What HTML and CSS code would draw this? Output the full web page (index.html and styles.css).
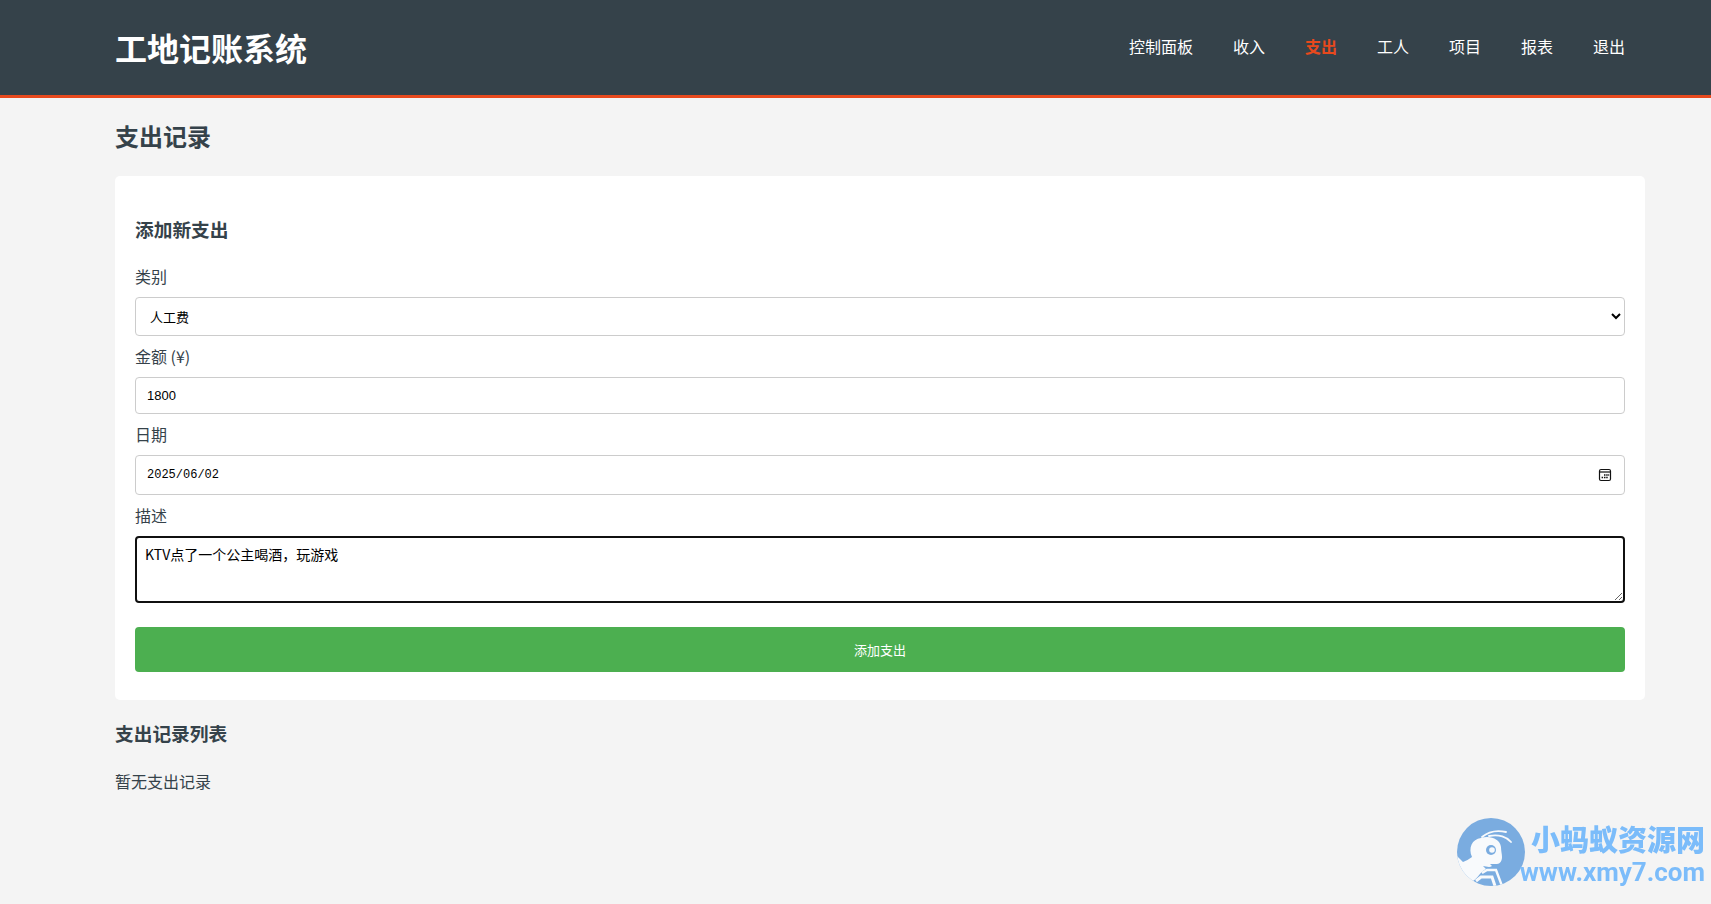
FILE: index.html
```html
<!DOCTYPE html>
<html lang="zh-CN">
<head>
  <meta charset="UTF-8" />
  <meta name="viewport" content="width=device-width, initial-scale=1.0"/>
  <title>支出记录 - 工地记账系统</title>
  <link rel="stylesheet" href="styles.css">
</head>
<body>
  <header>
    <div class="container header-row">
      <h1>工地记账系统</h1>
      <nav>
        <ul>
          <li><a href="/dashboard">控制面板</a></li>
          <li><a href="/income">收入</a></li>
          <li class="current"><a href="/expense">支出</a></li>
          <li><a href="/workers">工人</a></li>
          <li><a href="/projects">项目</a></li>
          <li><a href="/reports">报表</a></li>
          <li><a href="/logout">退出</a></li>
        </ul>
      </nav>
    </div>
  </header>

  <main class="container">
    <h2>支出记录</h2>

    <section class="card">
      <h3>添加新支出</h3>
      <form action="/expense" method="post">
        <label for="category">类别</label>
        <select id="category" name="category">
          <option selected>人工费</option>
          <option>材料费</option>
          <option>设备费</option>
          <option>其他</option>
        </select>

        <label for="amount">金额 (¥)</label>
        <input type="text" inputmode="decimal" id="amount" name="amount" value="1800" required />

        <label for="date">日期</label>
        <div class="date-field">
          <input type="text" id="date" name="date" value="2025/06/02" required />
          <button type="button" class="date-picker" aria-label="选择日期">
            <svg width="14" height="14" viewBox="0 0 14 14">
              <rect x="1.5" y="1.5" width="11" height="11" rx="1.5" fill="none" stroke="#111" stroke-width="1.2"/>
              <path d="M1.5 4h11" stroke="#111" stroke-width="1.2"/>
              <path d="M6 7h1.5M8.2 7h1.5M10.2 7h1M3.6 9.5h1.5M6 9.5h1.5M8.2 9.5h1.5" stroke="#111" stroke-width="1.5"/>
            </svg>
          </button>
        </div>

        <label for="description">描述</label>
        <textarea id="description" name="description">KTV点了一个公主喝酒，玩游戏</textarea>

        <button type="submit" class="submit">添加支出</button>
      </form>
    </section>

    <h3>支出记录列表</h3>
    <p>暂无支出记录</p>
  </main>

  <aside class="site-badge">
    <svg width="68" height="68" viewBox="0 0 68 68">
      <defs>
        <clipPath id="disc"><circle cx="34" cy="34" r="34"/></clipPath>
      </defs>
      <circle cx="34" cy="34" r="34" fill="#7aace0"/>
      <g clip-path="url(#disc)">
        <path d="M0 38L6 44C9 43 12 41 15 39C11 30 15 21 24 20C33 17 43 21 44 29C44 33 45 36 45 39C45 43 43 46 40 46H33L35 48C32 50 29 48 26 48L29 51C23 54 21 60 16 63L10 68H0z" fill="#f8fafc"/>
        <path d="M25 19C31 14 40 12 49 14M32 18C42 16 50 19 54 24" fill="none" stroke="#f8fafc" stroke-width="1.8" stroke-linecap="round"/>
        <path d="M25 55L30 52H39L45 68" fill="none" stroke="#f8fafc" stroke-width="2.4"/>
        <path d="M19 63L24 59H35L38 68" fill="none" stroke="#f8fafc" stroke-width="3"/>
      </g>
      <circle cx="34" cy="32" r="5" fill="#7aace0"/>
      <circle cx="35" cy="32" r="2.8" fill="#f8fafc"/>
    </svg>
    <div class="badge-text">
      <span class="badge-name">小蚂蚁资源网</span>
      <span class="badge-url">www.xmy7.com</span>
    </div>
  </aside>
</body>
</html>
```

FILE: styles.css
```css
body {
  margin: 0;
  padding: 0;
  font-family: "Noto Sans CJK SC", sans-serif;
  font-size: 16px;
  line-height: 24px;
  background-color: #f4f4f4;
  color: #35424a;
}

.container {
  margin: 0 66px 0 115px;
}

header {
  background-color: #35424a;
  color: #fff;
  border-bottom: 3px solid #e8491d;
}

.header-row {
  display: flex;
  justify-content: space-between;
  align-items: center;
  padding: 23px 0 24px;
}

h1 {
  margin: 0;
  font-size: 32px;
  line-height: 48px;
}

nav ul {
  display: flex;
  gap: 40px;
  margin: 0;
  padding: 0 20px 2px;
  list-style: none;
}

nav a {
  color: #fff;
  text-decoration: none;
}

nav .current a {
  color: #e8491d;
  font-weight: bold;
}

h2 {
  margin: 20px 0 22px;
  font-size: 24px;
  line-height: 36px;
}

h3 {
  margin: 19px 0 22px;
  line-height: 28px;
}

p {
  margin: 0;
}

.card {
  background-color: #fff;
  padding: 20px 20px 28px;
  border-radius: 5px;
}

form {
  display: flex;
  flex-direction: column;
  gap: 9px;
}

label {
  line-height: 23px;
}

select,
input,
textarea {
  box-sizing: border-box;
  width: 100%;
  padding: 8px 10px;
  border: 1px solid #ccc;
  border-radius: 4px;
  background-color: #fff;
  color: #000;
}

select {
  height: 39px;
  font-family: "Noto Sans CJK SC", sans-serif;
  font-size: 13px;
}

input {
  height: 37px;
  padding: 8px 11px;
  font-family: "Liberation Sans", Arial, sans-serif;
  font-size: 13px;
}

.date-field {
  position: relative;
}

.date-field input {
  display: block;
  height: 40px;
  font-family: "Liberation Mono", monospace;
  font-size: 12px;
}

.date-picker {
  position: absolute;
  top: 0;
  right: 13px;
  display: flex;
  align-items: center;
  height: 100%;
  padding: 0;
  border: none;
  background: none;
  cursor: pointer;
}

textarea {
  height: 67px;
  padding: 6px 8px;
  border: 2px solid #101010;
  font-family: "Noto Sans CJK SC", sans-serif;
  font-size: 14px;
  line-height: 20px;
  resize: vertical;
}

.submit {
  height: 45px;
  margin-top: 15px;
  border: none;
  border-radius: 4px;
  background-color: #4caf50;
  color: #fff;
  font-family: "Noto Sans CJK SC", sans-serif;
  font-size: 13px;
  cursor: pointer;
}

.site-badge {
  position: fixed;
  right: 6px;
  bottom: 15px;
  display: flex;
  align-items: center;
  color: #7bbcfa;
  font-weight: 900;
}

.badge-text {
  display: flex;
  flex-direction: column;
  margin-left: -5px;
  padding-top: 6px;
}

.badge-name {
  font-size: 29px;
  line-height: 34px;
  text-align: right;
}

.badge-url {
  font-family: Roboto, sans-serif;
  font-size: 26px;
  font-weight: bold;
  line-height: 34px;
}
```
